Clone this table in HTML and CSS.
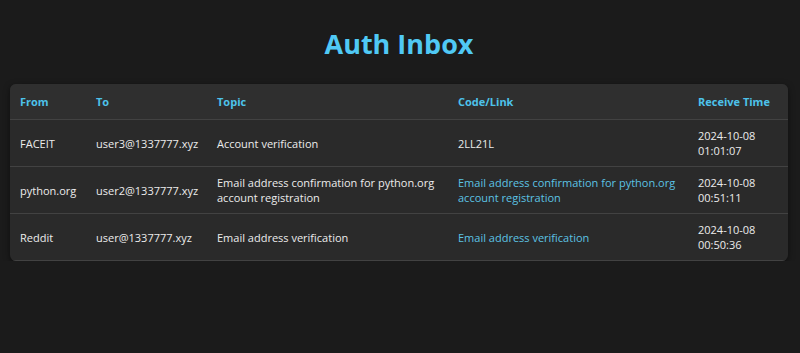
FILE: index.html
```html
<!DOCTYPE html>
<html lang="en">
<head>
<meta charset="utf-8">
<title>Auth Inbox</title>
<link rel="stylesheet" href="styles.css">
</head>
<body>
<main class="page">
  <h1 class="title">Auth Inbox</h1>
  <div class="table-wrap">
    <table class="inbox">
      <colgroup>
        <col class="c-from">
        <col class="c-to">
        <col class="c-topic">
        <col class="c-code">
        <col class="c-time">
      </colgroup>
      <thead>
        <tr>
          <th>From</th>
          <th>To</th>
          <th>Topic</th>
          <th>Code/Link</th>
          <th>Receive Time</th>
        </tr>
      </thead>
      <tbody>
        <tr>
          <td>FACEIT</td>
          <td>user3@1337777.xyz</td>
          <td>Account verification</td>
          <td>2LL21L</td>
          <td>2024-10-08<br>01:01:07</td>
        </tr>
        <tr>
          <td>python.org</td>
          <td>user2@1337777.xyz</td>
          <td>Email address confirmation for python.org account registration</td>
          <td><a class="link" href="#">Email address confirmation for python.org account registration</a></td>
          <td>2024-10-08<br>00:51:11</td>
        </tr>
        <tr>
          <td>Reddit</td>
          <td>user@1337777.xyz</td>
          <td>Email address verification</td>
          <td><a class="link" href="#">Email address verification</a></td>
          <td>2024-10-08<br>00:50:36</td>
        </tr>
      </tbody>
    </table>
  </div>
</main>
</body>
</html>
```
FILE: styles.css
```css
html, body {
  margin: 0;
  padding: 0;
  background: #1b1b1b;
}
body {
  font-family: "Open Sans", "Liberation Sans", sans-serif;
  color: #e6e6e6;
}
.page {
  padding: 0 12px 0 10px;
}
.title {
  margin: 26px 0 22px;
  text-align: center;
  font-size: 27px;
  font-weight: 700;
  line-height: 36px;
  color: #50c9f5;
}
.table-wrap {
  background: #2a2a2a;
  border-radius: 6px;
  overflow: hidden;
  box-shadow: 0 2px 6px rgba(0, 0, 0, 0.5);
}
.inbox {
  width: 100%;
  table-layout: fixed;
  border-collapse: collapse;
  font-size: 11px;
  line-height: 15px;
}
.c-from { width: 76px; }
.c-to { width: 121px; }
.c-topic { width: 241px; }
.c-code { width: 240px; }
.c-time { width: 100px; }
.inbox th {
  text-align: left;
  font-weight: 700;
  color: #4dc2ea;
  background: #2f2f2f;
  padding: 10px 10px;
  border-bottom: 1px solid #424242;
}
.inbox td {
  padding: 8px 10px;
  vertical-align: middle;
  border-bottom: 1px solid #424242;
  color: #ececec;
}
.link {
  color: #5cc3e4;
  text-decoration: none;
}
```
